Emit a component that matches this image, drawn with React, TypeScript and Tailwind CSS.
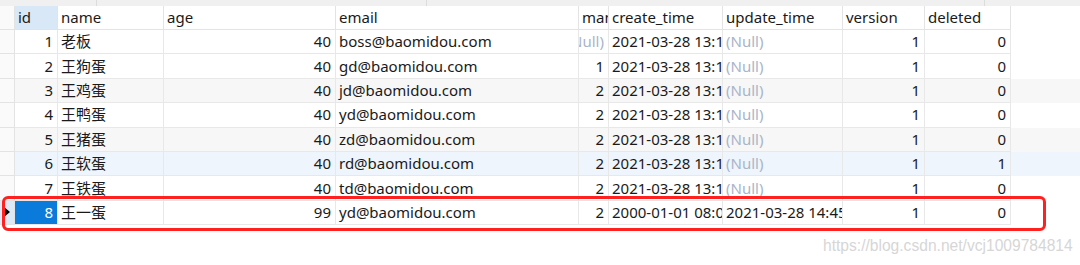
import React from "react";

const cols = [
  { name: "id", w: 43, align: "r" as const },
  { name: "name", w: 106, align: "l" as const },
  { name: "age", w: 172, align: "r" as const },
  { name: "email", w: 243, align: "l" as const },
  { name: "manager_id", w: 30, align: "r" as const },
  { name: "create_time", w: 114, align: "l" as const },
  { name: "update_time", w: 120, align: "l" as const },
  { name: "version", w: 82, align: "r" as const },
  { name: "deleted", w: 86, align: "r" as const },
];

const N = "(Null)";
const rows: string[][] = [
  ["1", "老板", "40", "boss@baomidou.com", N, "2021-03-28 13:12:40", N, "1", "0"],
  ["2", "王狗蛋", "40", "gd@baomidou.com", "1", "2021-03-28 13:12:40", N, "1", "0"],
  ["3", "王鸡蛋", "40", "jd@baomidou.com", "2", "2021-03-28 13:12:40", N, "1", "0"],
  ["4", "王鸭蛋", "40", "yd@baomidou.com", "2", "2021-03-28 13:12:40", N, "1", "0"],
  ["5", "王猪蛋", "40", "zd@baomidou.com", "2", "2021-03-28 13:12:40", N, "1", "0"],
  ["6", "王软蛋", "40", "rd@baomidou.com", "2", "2021-03-28 13:12:40", N, "1", "1"],
  ["7", "王铁蛋", "40", "td@baomidou.com", "2", "2021-03-28 13:12:40", N, "1", "0"],
  ["8", "王一蛋", "99", "yd@baomidou.com", "2", "2000-01-01 08:00:00", "2021-03-28 14:45:31", "1", "0"],
];

const rowBg = ["bg-white", "bg-white", "bg-[#f7f7f7]", "bg-white", "bg-[#f7f7f7]", "bg-[#eef5fc]", "bg-white", "bg-white"];

const font = { fontFamily: '"Noto Sans", "Noto Sans CJK SC", sans-serif' };

export default function App() {
  return (
    <div className="relative w-[1080px] h-[265px] bg-white overflow-hidden text-[15px] text-[#1a1a1a]" style={font}>
      {/* top strip */}
      <div className="flex h-[6px] bg-[#f0f0f0]">
        <div className="w-[97px] border-r border-[#dcdcdc]" />
        <div className="w-[330px] border-r border-[#dcdcdc]" />
        <div className="w-[558px] border-r border-[#dcdcdc]" />
        <div className="flex-1" />
      </div>
      {/* header */}
      <div className="flex h-[24px]">
        <div className="w-[15px] shrink-0 border-r border-b border-[#e3e3e3] bg-[#fafafa]" />
        {cols.map((c, i) => (
          <div
            key={c.name}
            style={{ width: c.w }}
            className={`shrink-0 flex items-center overflow-hidden whitespace-nowrap pl-[3px] border-r border-b border-[#e3e3e3] leading-none ${
              i === 0 ? "bg-[#d9e8f7]" : "bg-white"
            }`}
          >
            {c.name}
          </div>
        ))}
      </div>
      {rows.map((r, ri) => {
        const selected = ri === 7;
        return (
          <div key={ri} className={`flex h-[24.4px] ${rowBg[ri]}`}>
            <div
              className={`w-[15px] shrink-0 flex items-center justify-center border-r border-b border-[#e3e3e3] ${
                selected ? "bg-[#dde9f6]" : "bg-[#fafafa]"
              }`}
            >
              {selected && (
                <svg width="6" height="10" viewBox="0 0 6 10">
                  <path d="M0 0 L6 5 L0 10 Z" fill="#000" />
                </svg>
              )}
            </div>
            {cols.map((c, ci) => {
              const v = r[ci];
              const isNull = v === N;
              const sel = selected && ci === 0;
              return (
                <div
                  key={ci}
                  style={{ width: c.w }}
                  className={`shrink-0 flex items-center overflow-hidden whitespace-nowrap border-r border-b border-[#e8e8e8] leading-none ${
                    c.align === "r" ? "justify-end pr-[4px]" : "justify-start pl-[3px]"
                  } ${sel ? "bg-[#0a7bdb] text-white" : ""} ${isNull ? "text-[#a9b5c9]" : ""}`}
                >
                  <span className="shrink-0">{v}</span>
                </div>
              );
            })}
          </div>
        );
      })}
      {/* red highlight */}
      <div className="absolute left-[2px] top-[196px] w-[1044px] h-[35px] border-[3px] border-[#ff2020] rounded-[6px] pointer-events-none" />
      {/* watermark */}
      <div
        className="absolute left-[823px] top-[234px] text-[15.6px] text-[#d6d6d6] whitespace-nowrap"
        style={{ fontFamily: '"Liberation Sans", Arial, sans-serif' }}
      >
        https://blog.csdn.net/vcj1009784814
      </div>
    </div>
  );
}
